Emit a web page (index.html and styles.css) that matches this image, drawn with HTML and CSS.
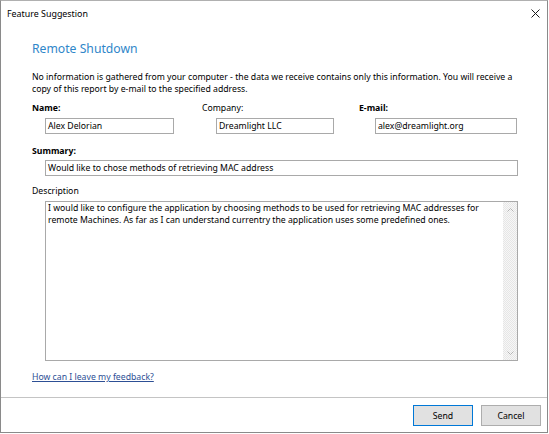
FILE: index.html
```html
<!DOCTYPE html>
<html lang="en">
<head>
<meta charset="utf-8">
<title>Feature Suggestion</title>
<link rel="stylesheet" href="styles.css">
</head>
<body>
<div class="window">
  <div class="titlebar">
    <span class="title">Feature Suggestion</span>
    <svg class="close" width="9" height="9" viewBox="0 0 9 9"><path d="M0.5 0.5 L8.5 8.5 M8.5 0.5 L0.5 8.5" stroke="#1a1a1a" stroke-width="1" fill="none"/></svg>
  </div>
  <div class="content">
    <h1 class="heading">Remote Shutdown</h1>
    <p class="intro">No information is gathered from your computer - the data we receive contains only this information. You will receive a copy of this report by e-mail to the specified address.</p>
    <div class="fields">
      <div class="field col1">
        <div class="label bold">Name:</div>
        <div class="box w-name">Alex Delorian</div>
      </div>
      <div class="field col2">
        <div class="label">Company:</div>
        <div class="box w-company">Dreamlight LLC</div>
      </div>
      <div class="field col3">
        <div class="label bold">E-mail:</div>
        <div class="box w-email">alex@dreamlight.org</div>
      </div>
    </div>
    <div class="label bold summary-label">Summary:</div>
    <div class="box wide">Would like to chose methods of retrieving MAC address</div>
    <div class="label desc-label">Description</div>
    <div class="textarea">
      <div class="ta-text">I would like to configure the application by choosing methods to be used for retrieving MAC addresses for remote Machines. As far as I can understand currentry the application uses some predefined ones.</div>
      <div class="scrollbar">
        <svg class="arrow" width="7" height="4" viewBox="0 0 7 4"><path d="M0.5 3.5 L3.5 0.5 L6.5 3.5" stroke="#b4b4b4" fill="none"/></svg>
        <svg class="arrow" width="7" height="4" viewBox="0 0 7 4"><path d="M0.5 0.5 L3.5 3.5 L6.5 0.5" stroke="#b4b4b4" fill="none"/></svg>
      </div>
    </div>
    <a class="link" href="#">How can I leave my feedback?</a>
  </div>
  <div class="footer">
    <button class="btn default">Send</button>
    <button class="btn">Cancel</button>
  </div>
</div>
</body>
</html>
```
FILE: styles.css
```css
html, body {
  margin: 0;
  padding: 0;
  background: #ffffff;
}
body {
  font-family: "Noto Sans", "Open Sans", sans-serif;
  font-size: 8.7px;
  color: #000;
}
.window {
  width: 548px;
  height: 433px;
  box-sizing: border-box;
  border: 1px solid #8a8a8a;
  border-top-color: #b0b0b0;
  display: flex;
  flex-direction: column;
  background: #fff;
}
.titlebar {
  height: 25px;
  display: flex;
  align-items: center;
  justify-content: space-between;
  padding: 0 7px 0 6px;
  flex: none;
}
.title {
  font-size: 8.9px;
  color: #000;
}
.close {
  display: block;
}
.content {
  flex: 1;
  padding: 0 30px 0 31px;
  display: flex;
  flex-direction: column;
  align-items: flex-start;
}
.heading {
  margin: 15px 0 0 0;
  font-size: 12.2px;
  font-weight: normal;
  line-height: 16px;
  color: #2f86c9;
}
.intro {
  margin: 15px 0 0 0;
  line-height: 11.5px;
  width: 490px;
}
.fields {
  display: grid;
  grid-template-columns: 170px 157px auto;
  margin-top: 7px;
}
.label {
  line-height: 12px;
}
.bold {
  font-weight: bold;
}
.box {
  box-sizing: border-box;
  height: 16px;
  border: 1px solid #a9a9a9;
  padding: 0 3px 0 2px;
  line-height: 14px;
  white-space: nowrap;
  overflow: hidden;
  background: #fff;
}
.field .box {
  margin-top: 4px;
}
.col1 .box { margin-left: 13px; }
.col2 .box { margin-left: 14px; }
.col3 .box { margin-left: 16px; }
.w-name { width: 129px; }
.w-company { width: 118px; }
.w-email { width: 142px; }
.summary-label {
  margin-top: 11px;
}
.box.wide {
  margin: 3px 0 0 13px;
  width: 473px;
}
.desc-label {
  margin-top: 9px;
  font-weight: normal;
}
.textarea {
  margin: 4px 0 0 13px;
  width: 473px;
  height: 160px;
  box-sizing: border-box;
  border: 1px solid #a9a9a9;
  display: flex;
  background: #fff;
}
.ta-text {
  flex: 1;
  padding: 1px 4px 0 2px;
  line-height: 11.5px;
}
.scrollbar {
  width: 14px;
  flex: none;
  display: flex;
  flex-direction: column;
  justify-content: space-between;
  align-items: center;
  padding: 6px 0 5px;
  box-sizing: border-box;
  background-color: #f0f0f0;
  background-image: repeating-conic-gradient(#e6e6e6 0 25%, #f7f7f7 0 50%);
  background-size: 2px 2px;
}
.arrow {
  display: block;
}
.link {
  margin-top: 10px;
  line-height: 12px;
  color: #2d4f95;
  text-decoration: underline;
}
.footer {
  flex: none;
  height: 35px;
  box-sizing: border-box;
  border-top: 1px solid #c4c4c4;
  display: flex;
  justify-content: flex-end;
  align-items: flex-start;
  gap: 8px;
  padding: 7px 6px 0 0;
}
.btn {
  width: 60px;
  height: 21px;
  box-sizing: border-box;
  border: 1px solid #adadad;
  background: #e1e1e1;
  font-family: "Noto Sans", "Open Sans", sans-serif;
  font-size: 8.7px;
  color: #000;
  padding: 0;
}
.btn.default {
  border-color: #0078d7;
}
```
